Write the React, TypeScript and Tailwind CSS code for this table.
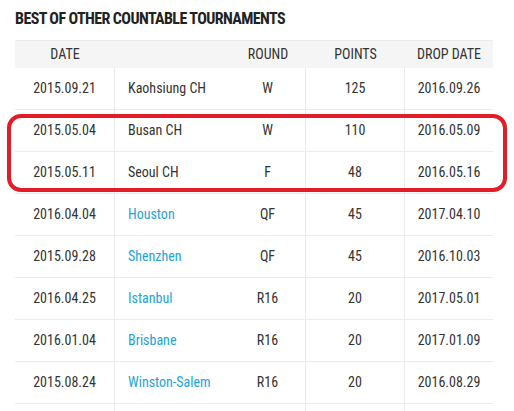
import React from 'react';

type Row = { date: string; name: string; link?: boolean; round: string; points: string; drop: string };

const ROWS: Row[] = [
  { date: '2015.09.21', name: 'Kaohsiung CH', round: 'W', points: '125', drop: '2016.09.26' },
  { date: '2015.05.04', name: 'Busan CH', round: 'W', points: '110', drop: '2016.05.09' },
  { date: '2015.05.11', name: 'Seoul CH', round: 'F', points: '48', drop: '2016.05.16' },
  { date: '2016.04.04', name: 'Houston', link: true, round: 'QF', points: '45', drop: '2017.04.10' },
  { date: '2015.09.28', name: 'Shenzhen', link: true, round: 'QF', points: '45', drop: '2016.10.03' },
  { date: '2016.04.25', name: 'Istanbul', link: true, round: 'R16', points: '20', drop: '2017.05.01' },
  { date: '2016.01.04', name: 'Brisbane', link: true, round: 'R16', points: '20', drop: '2017.01.09' },
  { date: '2015.08.24', name: 'Winston-Salem', link: true, round: 'R16', points: '20', drop: '2016.08.29' },
];

const font = { fontFamily: '"Roboto Condensed", "Liberation Sans Narrow", "Arial Narrow", Roboto, sans-serif' };
const cols = 'grid grid-cols-[100px_115px_76px_99px_88px]';

export default function App() {
  return (
    <div className="relative w-[514px] h-[411px] overflow-hidden bg-white text-[#333]" style={font}>
      <h2 className="pl-[15px] pt-[9px] h-[40px] text-[16px] font-bold leading-[20px] text-[#222] tracking-[-0.6px]">
        BEST OF OTHER COUNTABLE TOURNAMENTS
      </h2>

      <div className="ml-[15px] w-[478px] text-[14px]">
        <div className={`${cols} h-[28px] items-center bg-[#f5f5f5] border-t border-[#ececec] text-center`}>
          <div>DATE</div>
          <div></div>
          <div>ROUND</div>
          <div>POINTS</div>
          <div>DROP DATE</div>
        </div>

        {ROWS.map((r) => (
          <div key={r.date + r.name} className={`${cols} h-[42px] items-center border-b border-[#ebebeb] text-center`}>
            <div className="h-full flex items-center justify-center border-r border-[#ebebeb]">{r.date}</div>
            <div className={`text-left pl-[13px] ${r.link ? 'text-[#22a3dc]' : ''}`}>{r.name}</div>
            <div className="h-full flex items-center justify-center border-r border-[#ebebeb]">{r.round}</div>
            <div className="h-full flex items-center justify-center border-r border-[#ebebeb]">{r.points}</div>
            <div>{r.drop}</div>
          </div>
        ))}

        <div className={`${cols} h-[42px]`}>
          <div className="border-r border-[#ebebeb]"></div>
          <div></div>
          <div className="border-r border-[#ebebeb]"></div>
          <div className="border-r border-[#ebebeb]"></div>
          <div></div>
        </div>
      </div>

      {/* highlight around the two korean challengers */}
      <div className="absolute left-[7px] top-[114px] w-[500px] h-[78px] rounded-[14px] border-4 border-[#e31c25]" />
    </div>
  );
}
